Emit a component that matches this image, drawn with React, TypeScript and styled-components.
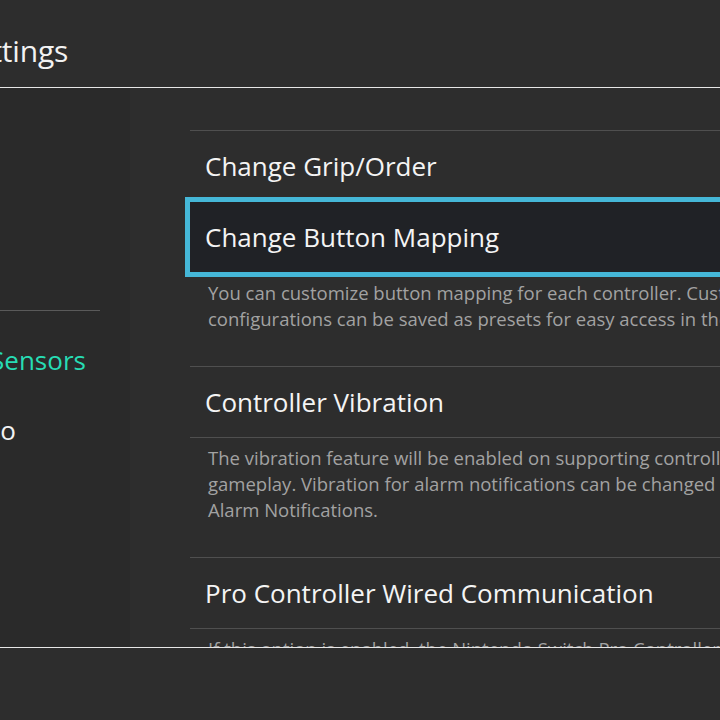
import React from "react";
import styled, { createGlobalStyle } from "styled-components";

const GlobalStyle = createGlobalStyle`
    html, body {
        margin: 0;
        padding: 0;
        background: #2d2d2d;
        overflow: hidden;
    }
    * {
        box-sizing: border-box;
    }
`;

// how far the whole screen is pushed past the left edge of the photo
const OFFSET = 300;

const sidebarItems = [
    { label: "Notifications" },
    { label: "Sleep Mode", divider: true },
    { label: "Controllers and Sensors", active: true },
    { label: "Bluetooth Audio" },
];

const settings = [
    { title: "Change Grip/Order", lines: [] as string[] },
    {
        title: "Change Button Mapping",
        selected: true,
        lines: [
            "You can customize button mapping for each controller. Customized button",
            "configurations can be saved as presets for easy access in the future.",
        ],
    },
    {
        title: "Controller Vibration",
        lines: [
            "The vibration feature will be enabled on supporting controllers during",
            "gameplay. Vibration for alarm notifications can be changed in",
            "Alarm Notifications.",
        ],
    },
    {
        title: "Pro Controller Wired Communication",
        lines: [
            "If this option is enabled, the Nintendo Switch Pro Controller will",
            "communicate via USB cable when connected to the console.",
        ],
    },
];

const App = () => {
    return (
        <>
            <GlobalStyle />
            <Pantalla>
                <Marco>
                    <Cabecera>
                        <TituloCabecera>System Settings</TituloCabecera>
                    </Cabecera>
                    <Cuerpo>
                        <BarraLateral>
                            {sidebarItems.map((item) => (
                                <React.Fragment key={item.label}>
                                    <ItemLateral $active={item.active}>{item.label}</ItemLateral>
                                    {item.divider && <SeparadorLateral />}
                                </React.Fragment>
                            ))}
                        </BarraLateral>
                        <Principal>
                            <Lista>
                                {settings.map((s) => (
                                    <React.Fragment key={s.title}>
                                        <Fila $selected={s.selected}>{s.title}</Fila>
                                        {s.lines.length > 0 && (
                                            <Descripcion>
                                                {s.lines.map((l) => (
                                                    <Linea key={l}>{l}</Linea>
                                                ))}
                                            </Descripcion>
                                        )}
                                    </React.Fragment>
                                ))}
                            </Lista>
                        </Principal>
                    </Cuerpo>
                    <Pie />
                </Marco>
            </Pantalla>
        </>
    );
};

export default App;

const Pantalla = styled.div`
    width: 720px;
    height: 720px;
    overflow: hidden;
    background: #2d2d2d;
    font-family: "Open Sans", "Noto Sans", sans-serif;
`;

const Marco = styled.div`
    width: ${720 + OFFSET}px;
    height: 720px;
    margin-left: -${OFFSET}px;
    display: grid;
    grid-template-rows: 88px 559px 73px;
`;

const Cabecera = styled.div`
    display: flex;
    align-items: center;
    border-bottom: 1px solid #e6e6e6;
    padding-left: 151px;
    padding-top: 14px;
`;

const TituloCabecera = styled.h1`
    margin: 0;
    font-size: 30px;
    font-weight: 400;
    color: #f2f2f2;
    letter-spacing: -0.2px;
`;

const Cuerpo = styled.div`
    display: grid;
    grid-template-columns: ${OFFSET + 130}px 1fr;
    overflow: hidden;
`;

const BarraLateral = styled.div`
    background: #2a2a2a;
    padding-top: 68px;
    display: flex;
    flex-direction: column;
`;

// the highlighted entry sits a little further left than the others
const ItemLateral = styled.div<{ $active?: boolean }>`
    height: 70px;
    display: flex;
    align-items: center;
    padding-left: ${(p) => (p.$active ? 96 : 119)}px;
    font-size: 26px;
    color: ${(p) => (p.$active ? "#27dcb4" : "#f2f2f2")};
    white-space: nowrap;
`;

const SeparadorLateral = styled.div`
    height: 1px;
    background: #5a5a5a;
    margin: 14px 30px 14px 0;
`;

const Principal = styled.div`
    padding: 42px 0 0 60px;
    overflow: hidden;
`;

const Lista = styled.div`
    width: 800px;
    display: flex;
    flex-direction: column;
`;

const Fila = styled.div<{ $selected?: boolean }>`
    position: relative;
    display: flex;
    align-items: center;
    height: 71px;
    padding-left: 15px;
    border-top: 1px solid #4f4f4f;
    font-size: 26px;
    color: #f4f4f4;
    white-space: nowrap;
    ${(p) =>
        p.$selected &&
        `
        z-index: 1;
        height: 80px;
        margin: -4px -5px -5px -5px;
        border: 5px solid #45b7d7;
        background: #202226;
    `}
`;

const Descripcion = styled.div`
    border-top: 1px solid #4f4f4f;
    padding: 7px 0 34px 18px;
`;

const Linea = styled.div`
    font-size: 18.5px;
    line-height: 26px;
    color: #a2a2a2;
    white-space: nowrap;
`;

const Pie = styled.div`
    border-top: 1px solid #e6e6e6;
    background: #2d2d2d;
    position: relative;
    z-index: 2;
`;
